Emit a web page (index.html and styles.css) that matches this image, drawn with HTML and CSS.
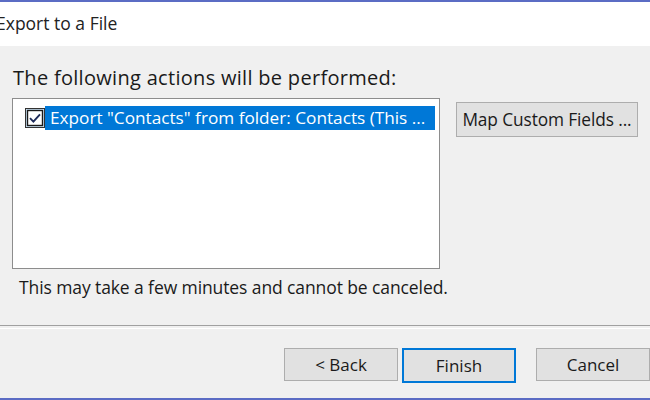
FILE: index.html
```html
<!DOCTYPE html>
<html>
<head>
<meta charset="utf-8">
<link rel="stylesheet" href="styles.css">
</head>
<body>
<div class="window">
  <div class="topline"></div>
  <div class="header"><span class="title">Export to a File</span></div>
  <div class="content">
    <div class="label">The following actions will be performed:</div>
    <div class="row">
      <div class="listbox">
        <div class="item">
          <span class="check">
            <svg width="20" height="20" viewBox="0 0 20 20">
              <rect x="0.5" y="0.5" width="19" height="19" fill="#cce4f7" stroke="#333"/>
              <rect x="2.5" y="2.5" width="15" height="15" fill="#fff" stroke="#1a1a1a" stroke-width="1.4"/>
              <path d="M5 10.2 L8.4 13.6 L15 6.4" fill="none" stroke="#1d2b5a" stroke-width="1.9"/>
            </svg>
          </span>
          <span class="item-text">Export "Contacts" from folder: Contacts (This ...</span>
        </div>
      </div>
      <button class="btn map">Map Custom Fields ...</button>
    </div>
    <div class="note">This may take a few minutes and cannot be canceled.</div>
  </div>
  <div class="separator"></div>
  <div class="footer">
    <button class="btn nav">&lt; Back</button>
    <button class="btn nav default">Finish</button>
    <button class="btn nav cancel">Cancel</button>
  </div>
  <div class="bottomline"></div>
</div>
</body>
</html>
```
FILE: styles.css
```css
html, body {
  margin: 0;
  padding: 0;
  background: #f0f0f0;
}
.window {
  width: 650px;
  height: 400px;
  overflow: hidden;
  display: flex;
  flex-direction: column;
  font-family: "Open Sans", "Noto Sans", sans-serif;
  color: #1a1a1a;
  background: #f0f0f0;
}
.topline {
  height: 2px;
  background: #5b6cc4;
  flex: none;
}
.header {
  height: 44px;
  background: #fff;
  flex: none;
  display: flex;
  align-items: center;
}
.title {
  font-size: 17.5px;
  margin-left: -4px;
  margin-top: -2px;
  color: #222;
}
.content {
  flex: none;
  height: 278px;
  padding: 20px 0 0 13px;
  box-sizing: border-box;
}
.label {
  font-size: 20px;
  line-height: 24px;
  letter-spacing: 0.3px;
}
.row {
  display: flex;
  align-items: flex-start;
  margin-top: 8px;
}
.listbox {
  width: 428px;
  height: 171px;
  margin-left: -1px;
  background: #fff;
  border: 1px solid #8d8d8d;
  padding: 7px 4px 0 8px;
  box-sizing: border-box;
}
.item {
  display: flex;
  align-items: center;
  height: 24px;
}
.check {
  width: 20px;
  height: 20px;
  margin-left: 4px;
  flex: none;
  display: block;
}
.check svg {
  display: block;
}
.item-text {
  flex: 1;
  height: 24px;
  line-height: 24px;
  background: #0078d7;
  color: #fff;
  font-size: 17.2px;
  padding-left: 5px;
  white-space: nowrap;
  overflow: hidden;
}
.btn {
  font-family: "Open Sans", "Noto Sans", sans-serif;
  background: #e1e1e1;
  border: 1px solid #adadad;
  color: #1a1a1a;
  padding: 0;
  margin: 0;
  box-sizing: border-box;
  white-space: nowrap;
}
.map {
  margin-left: 16px;
  margin-top: 4px;
  width: 182px;
  height: 35px;
  font-size: 17.3px;
  letter-spacing: -0.1px;
}
.note {
  font-size: 17.5px;
  line-height: 22px;
  margin-top: 7px;
  padding-left: 6px;
  letter-spacing: -0.1px;
}
.separator {
  flex: none;
  height: 2px;
  border-top: 1px solid #a0a0a0;
  border-bottom: 1px solid #ffffff;
  margin-top: 1px;
}
.footer {
  flex: none;
  display: flex;
  padding: 19px 0 0 284px;
  height: 50px;
}
.nav {
  width: 115px;
  height: 33px;
  font-size: 17px;
}
.default {
  margin-left: 4px;
  border: 2px solid #0078d7;
  height: 35px;
}
.cancel {
  margin-left: 20px;
}
.bottomline {
  flex: none;
  margin-top: auto;
  height: 3px;
  background: #5b6cc4;
}
```
